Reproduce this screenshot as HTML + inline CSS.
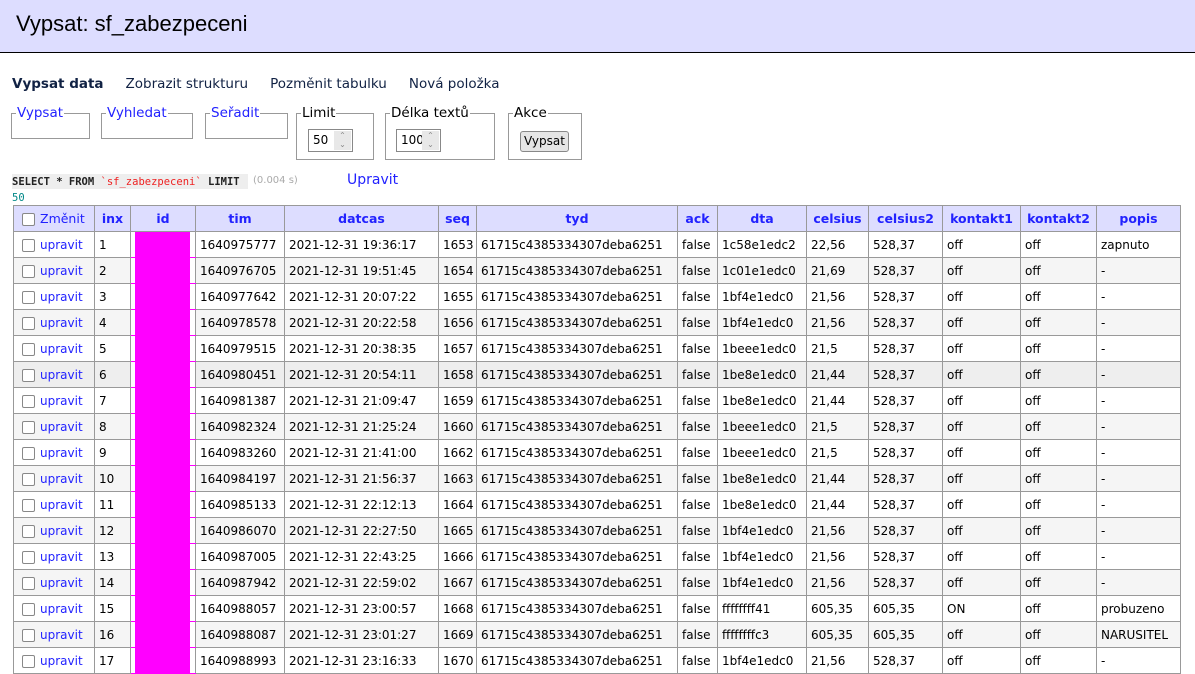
<!DOCTYPE html>
<html><head><meta charset="utf-8">
<style>
body{margin:0;font-family:"DejaVu Sans",Verdana,sans-serif;font-size:12px;background:#fff;color:#000;width:1195px;height:660px;overflow:hidden}
#h{height:53px;background:#ddf;border-bottom:1px solid #000;box-sizing:border-box}
#h h2{margin:0;font-weight:normal;font-size:21px;position:absolute;left:16px;top:11px;font-family:"Liberation Sans","DejaVu Sans",sans-serif;font-size:22px}
a{color:#22f;text-decoration:none}
.nav{position:absolute;top:76px;left:12px;font-size:14px;font-family:"DejaVu Sans",sans-serif;font-size:13.5px}
.nav span,.nav a{margin-right:22px;color:#124}
.nav b{color:#124}
.fs{position:absolute;border:1px solid #999;box-sizing:border-box;top:113px}
.fs .lg{position:absolute;top:-8px;left:4px;background:#fff;padding:0 1px;font-size:13.5px;line-height:15px}
.inp{position:absolute;top:15px;left:11px;height:23px;border:1px solid #888;background:#fff;box-sizing:border-box;font-size:12px;line-height:21px;padding-left:4px}
.inp i{position:absolute;right:1px;top:1px;width:17px;height:19px;background:#e8e8e8;color:#888;font-style:normal;font-size:8px;line-height:9px;text-align:center}
.btn{position:absolute;top:17px;left:11px;width:49px;height:21px;border:1px solid #888;border-radius:3px;background:#e5e5e5;font-size:12px;line-height:19px;text-align:center;box-sizing:border-box}
.sql{position:absolute;top:174px;left:12px;background:#eee;font-family:"DejaVu Sans Mono",monospace;font-size:10.5px;font-weight:bold;color:#222;line-height:16px;width:236px;height:15px}
table{position:absolute;top:205px;left:13px;border-collapse:collapse;table-layout:fixed;width:1168px}
td,th{border:1px solid #999;padding:0 4px;height:25px;white-space:nowrap;overflow:hidden}
th{background:#ddf;color:#22f;font-weight:bold;font-size:12.5px}
tr:nth-child(odd) td{background:#f5f5f5}
tr.hv td{background:#eee}
.cb{display:inline-block;width:11px;height:11px;border:1.5px solid #888;border-radius:2px;vertical-align:middle;margin:0 5px 0 3px;background:#fff}
td.m{background:#f0f!important;border-top-color:#f0f;border-bottom-color:#f0f;box-shadow:inset 4px 0 0 #fff,inset -5px 0 0 #fff}
</style></head><body>
<div id="h"><h2>Vypsat: sf_zabezpeceni</h2></div>
<div class="nav"><b style="margin-right:22px">Vypsat data</b><span>Zobrazit strukturu</span><span>Pozměnit tabulku</span><a>Nová položka</a></div>
<div class="fs" style="left:11px;width:79px;height:26px"><span class="lg"><a>Vypsat</a></span></div>
<div class="fs" style="left:90px;width:103px;height:26px;left:101px;width:92px"><span class="lg"><a>Vyhledat</a></span></div>
<div class="fs" style="left:205px;width:83px;height:26px"><span class="lg"><a>Seřadit</a></span></div>
<div class="fs" style="left:296px;width:78px;height:47px"><span class="lg">Limit</span><div class="inp" style="width:45px">50<i>⌃<br>⌄</i></div></div>
<div class="fs" style="left:385px;width:110px;height:47px"><span class="lg">Délka textů</span><div class="inp" style="width:45px;left:10px">100<i>⌃<br>⌄</i></div></div>
<div class="fs" style="left:508px;width:74px;height:47px"><span class="lg">Akce</span><div class="btn">Vypsat</div></div>
<div class="sql">SELECT * FROM <span style="color:#e22;font-weight:normal">`sf_zabezpeceni`</span> LIMIT <span style="color:#088;font-weight:normal">50</span></div>
<div style="position:absolute;top:175px;left:253px;font-size:10px;color:#aaa">(0.004 s)</div>
<div style="position:absolute;top:172px;left:347px;font-size:14px"><a>Upravit</a></div>
<table>
<colgroup><col style="width:81px"><col style="width:36px"><col style="width:65px"><col style="width:89px"><col style="width:154px"><col style="width:38px"><col style="width:201px"><col style="width:40px"><col style="width:89px"><col style="width:62px"><col style="width:74px"><col style="width:78px"><col style="width:76px"><col style="width:84px"></colgroup>
<tr><th style="text-align:left;padding:0"><span class="cb" style="margin-left:8px"></span><a style="font-weight:normal">Změnit</a></th><th>inx</th><th>id</th><th>tim</th><th>datcas</th><th>seq</th><th>tyd</th><th>ack</th><th>dta</th><th>celsius</th><th>celsius2</th><th>kontakt1</th><th>kontakt2</th><th>popis</th></tr>
<tr><td style="padding:0"><span class="cb" style="margin-left:8px"></span><a>upravit</a></td><td>1</td><td class="m"></td><td>1640975777</td><td>2021-12-31 19:36:17</td><td>1653</td><td>61715c4385334307deba6251</td><td>false</td><td>1c58e1edc2</td><td>22,56</td><td>528,37</td><td>off</td><td>off</td><td>zapnuto</td></tr>
<tr><td style="padding:0"><span class="cb" style="margin-left:8px"></span><a>upravit</a></td><td>2</td><td class="m"></td><td>1640976705</td><td>2021-12-31 19:51:45</td><td>1654</td><td>61715c4385334307deba6251</td><td>false</td><td>1c01e1edc0</td><td>21,69</td><td>528,37</td><td>off</td><td>off</td><td>-</td></tr>
<tr><td style="padding:0"><span class="cb" style="margin-left:8px"></span><a>upravit</a></td><td>3</td><td class="m"></td><td>1640977642</td><td>2021-12-31 20:07:22</td><td>1655</td><td>61715c4385334307deba6251</td><td>false</td><td>1bf4e1edc0</td><td>21,56</td><td>528,37</td><td>off</td><td>off</td><td>-</td></tr>
<tr><td style="padding:0"><span class="cb" style="margin-left:8px"></span><a>upravit</a></td><td>4</td><td class="m"></td><td>1640978578</td><td>2021-12-31 20:22:58</td><td>1656</td><td>61715c4385334307deba6251</td><td>false</td><td>1bf4e1edc0</td><td>21,56</td><td>528,37</td><td>off</td><td>off</td><td>-</td></tr>
<tr><td style="padding:0"><span class="cb" style="margin-left:8px"></span><a>upravit</a></td><td>5</td><td class="m"></td><td>1640979515</td><td>2021-12-31 20:38:35</td><td>1657</td><td>61715c4385334307deba6251</td><td>false</td><td>1beee1edc0</td><td>21,5</td><td>528,37</td><td>off</td><td>off</td><td>-</td></tr>
<tr class="hv"><td style="padding:0"><span class="cb" style="margin-left:8px"></span><a>upravit</a></td><td>6</td><td class="m"></td><td>1640980451</td><td>2021-12-31 20:54:11</td><td>1658</td><td>61715c4385334307deba6251</td><td>false</td><td>1be8e1edc0</td><td>21,44</td><td>528,37</td><td>off</td><td>off</td><td>-</td></tr>
<tr><td style="padding:0"><span class="cb" style="margin-left:8px"></span><a>upravit</a></td><td>7</td><td class="m"></td><td>1640981387</td><td>2021-12-31 21:09:47</td><td>1659</td><td>61715c4385334307deba6251</td><td>false</td><td>1be8e1edc0</td><td>21,44</td><td>528,37</td><td>off</td><td>off</td><td>-</td></tr>
<tr><td style="padding:0"><span class="cb" style="margin-left:8px"></span><a>upravit</a></td><td>8</td><td class="m"></td><td>1640982324</td><td>2021-12-31 21:25:24</td><td>1660</td><td>61715c4385334307deba6251</td><td>false</td><td>1beee1edc0</td><td>21,5</td><td>528,37</td><td>off</td><td>off</td><td>-</td></tr>
<tr><td style="padding:0"><span class="cb" style="margin-left:8px"></span><a>upravit</a></td><td>9</td><td class="m"></td><td>1640983260</td><td>2021-12-31 21:41:00</td><td>1662</td><td>61715c4385334307deba6251</td><td>false</td><td>1beee1edc0</td><td>21,5</td><td>528,37</td><td>off</td><td>off</td><td>-</td></tr>
<tr><td style="padding:0"><span class="cb" style="margin-left:8px"></span><a>upravit</a></td><td>10</td><td class="m"></td><td>1640984197</td><td>2021-12-31 21:56:37</td><td>1663</td><td>61715c4385334307deba6251</td><td>false</td><td>1be8e1edc0</td><td>21,44</td><td>528,37</td><td>off</td><td>off</td><td>-</td></tr>
<tr><td style="padding:0"><span class="cb" style="margin-left:8px"></span><a>upravit</a></td><td>11</td><td class="m"></td><td>1640985133</td><td>2021-12-31 22:12:13</td><td>1664</td><td>61715c4385334307deba6251</td><td>false</td><td>1be8e1edc0</td><td>21,44</td><td>528,37</td><td>off</td><td>off</td><td>-</td></tr>
<tr><td style="padding:0"><span class="cb" style="margin-left:8px"></span><a>upravit</a></td><td>12</td><td class="m"></td><td>1640986070</td><td>2021-12-31 22:27:50</td><td>1665</td><td>61715c4385334307deba6251</td><td>false</td><td>1bf4e1edc0</td><td>21,56</td><td>528,37</td><td>off</td><td>off</td><td>-</td></tr>
<tr><td style="padding:0"><span class="cb" style="margin-left:8px"></span><a>upravit</a></td><td>13</td><td class="m"></td><td>1640987005</td><td>2021-12-31 22:43:25</td><td>1666</td><td>61715c4385334307deba6251</td><td>false</td><td>1bf4e1edc0</td><td>21,56</td><td>528,37</td><td>off</td><td>off</td><td>-</td></tr>
<tr><td style="padding:0"><span class="cb" style="margin-left:8px"></span><a>upravit</a></td><td>14</td><td class="m"></td><td>1640987942</td><td>2021-12-31 22:59:02</td><td>1667</td><td>61715c4385334307deba6251</td><td>false</td><td>1bf4e1edc0</td><td>21,56</td><td>528,37</td><td>off</td><td>off</td><td>-</td></tr>
<tr><td style="padding:0"><span class="cb" style="margin-left:8px"></span><a>upravit</a></td><td>15</td><td class="m"></td><td>1640988057</td><td>2021-12-31 23:00:57</td><td>1668</td><td>61715c4385334307deba6251</td><td>false</td><td>ffffffff41</td><td>605,35</td><td>605,35</td><td>ON</td><td>off</td><td>probuzeno</td></tr>
<tr><td style="padding:0"><span class="cb" style="margin-left:8px"></span><a>upravit</a></td><td>16</td><td class="m"></td><td>1640988087</td><td>2021-12-31 23:01:27</td><td>1669</td><td>61715c4385334307deba6251</td><td>false</td><td>ffffffffc3</td><td>605,35</td><td>605,35</td><td>off</td><td>off</td><td>NARUSITEL</td></tr>
<tr><td style="padding:0"><span class="cb" style="margin-left:8px"></span><a>upravit</a></td><td>17</td><td class="m"></td><td>1640988993</td><td>2021-12-31 23:16:33</td><td>1670</td><td>61715c4385334307deba6251</td><td>false</td><td>1bf4e1edc0</td><td>21,56</td><td>528,37</td><td>off</td><td>off</td><td>-</td></tr>
</table>
</body></html>
